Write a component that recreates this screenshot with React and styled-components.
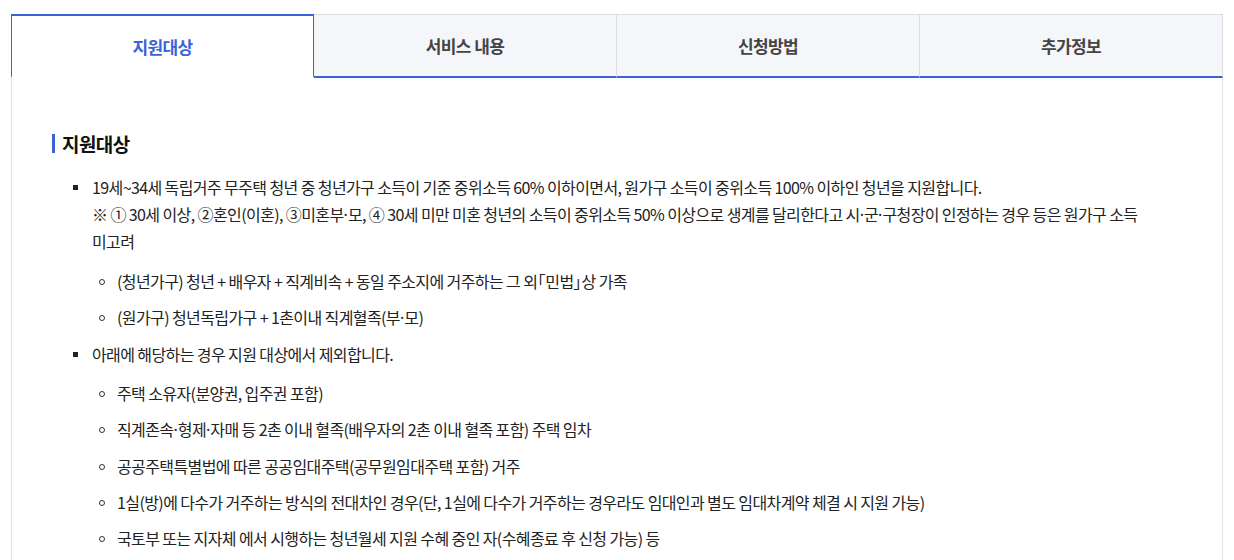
import React, { useState } from "react";
import styled, { createGlobalStyle } from "styled-components";

const GlobalStyle = createGlobalStyle`
  html, body {
    margin: 0;
    padding: 0;
    background: #fff;
    font-family: "Noto Sans CJK KR", "Noto Sans", sans-serif;
    color: #222;
  }
`;

const tabs = ["지원대상", "서비스 내용", "신청방법", "추가정보"];

const D = () => <Dot>·</Dot>;

const App = () => {
  const [active, setActive] = useState(0);
  return (
    <>
      <GlobalStyle />
      <Wrap>
        <TabList>
          {tabs.map((t, i) => (
            <Tab key={t} $active={i === active} onClick={() => setActive(i)}>
              {t}
            </Tab>
          ))}
        </TabList>
        <Panel>
          <Title>지원대상</Title>
          <List>
            <Item>
              19세~34세 독립거주 무주택 청년 중 청년가구 소득이 기준 중위소득 60% 이하이면서, 원가구 소득이 중위소득 100% 이하인 청년을 지원합니다.
              <br />
              ※ ① 30세 이상, ②혼인(이혼), ③미혼부<D />모, ④ 30세 미만 미혼 청년의 소득이 중위소득 50% 이상으로 생계를 달리한다고 시<D />군<D />구청장이 인정하는 경우 등은 원가구 소득 미고려
              <SubList>
                <SubItem>
                  (청년가구) 청년 + 배우자 + 직계비속 + 동일 주소지에 거주하는 그 외<Bracket>「</Bracket>민법<Bracket>」</Bracket>상 가족
                </SubItem>
                <SubItem>(원가구) 청년독립가구 + 1촌이내 직계혈족(부<D />모)</SubItem>
              </SubList>
            </Item>
            <Item>
              아래에 해당하는 경우 지원 대상에서 제외합니다.
              <SubList>
                <SubItem>주택 소유자(분양권, 입주권 포함)</SubItem>
                <SubItem>직계존속<D />형제<D />자매 등 2촌 이내 혈족(배우자의 2촌 이내 혈족 포함) 주택 임차</SubItem>
                <SubItem>공공주택특별법에 따른 공공임대주택(공무원임대주택 포함) 거주</SubItem>
                <SubItem>1실(방)에 다수가 거주하는 방식의 전대차인 경우(단, 1실에 다수가 거주하는 경우라도 임대인과 별도 임대차계약 체결 시 지원 가능)</SubItem>
                <SubItem>국토부 또는 지자체 에서 시행하는 청년월세 지원 수혜 중인 자(수혜종료 후 신청 가능) 등</SubItem>
              </SubList>
            </Item>
          </List>
        </Panel>
      </Wrap>
    </>
  );
};

export default App;

const Wrap = styled.div`
  padding: 14px 11px 0 11px;
  width: 1212px;
`;

const TabList = styled.div`
  display: grid;
  grid-template-columns: repeat(4, 1fr);
`;

const Tab = styled.button`
  height: 64px;
  margin: 0;
  padding: 0;
  font-family: inherit;
  font-size: 17px;
  font-weight: 700;
  letter-spacing: -0.6px;
  cursor: pointer;
  background: ${(p) => (p.$active ? "#fff" : "#f5f6fa")};
  color: ${(p) => (p.$active ? "#3b63d6" : "#444")};
  border: none;
  border-top: ${(p) => (p.$active ? "2px solid #3b63d6" : "1px solid #dcdde2")};
  border-left: ${(p) => (p.$active ? "1px solid #3b63d6" : "none")};
  border-right: ${(p) => (p.$active ? "1px solid #3b63d6" : "1px solid #dcdde2")};
  border-bottom: ${(p) => (p.$active ? "2px solid transparent" : "2px solid #3b63d6")};
  &:first-child {
    border-left: 1px solid #3b63d6;
  }
  &:last-child {
    border-right: 1px solid #dcdde2;
  }
`;

const Panel = styled.div`
  border-left: 1px solid #e2e2e2;
  border-right: 1px solid #e2e2e2;
  padding: 56px 40px 20px 40px;
  min-height: 500px;
`;

const Title = styled.h3`
  margin: 0 0 21px 0;
  padding-left: 7px;
  border-left: 3px solid #3b63d6;
  font-size: 19px;
  font-weight: 700;
  line-height: 19px;
  letter-spacing: -0.6px;
  color: #111;
`;

const List = styled.ul`
  margin: 0;
  padding: 0;
  list-style: none;
`;

const Item = styled.li`
  position: relative;
  padding-left: 40px;
  padding-right: 20px;
  font-size: 16px;
  line-height: 26.5px;
  letter-spacing: -0.6px;
  word-break: keep-all;
  color: #222;
  &::before {
    content: "";
    position: absolute;
    left: 21px;
    top: 11px;
    width: 5px;
    height: 5px;
    background: #222;
  }
`;

const Dot = styled.span`
  font-family: "Noto Sans", sans-serif;
  letter-spacing: 0;
`;

const Bracket = styled.span`
  font-feature-settings: "palt";
  letter-spacing: 0;
`;

const SubList = styled.ul`
  margin: 13px 0 0 0;
  padding: 0;
  list-style: none;
`;

const SubItem = styled.li`
  position: relative;
  padding-left: 25px;
  margin-bottom: 9.5px;
  &::before {
    content: "";
    position: absolute;
    left: 7px;
    top: 11px;
    width: 4px;
    height: 4px;
    border: 1px solid #333;
    border-radius: 50%;
  }
`;
